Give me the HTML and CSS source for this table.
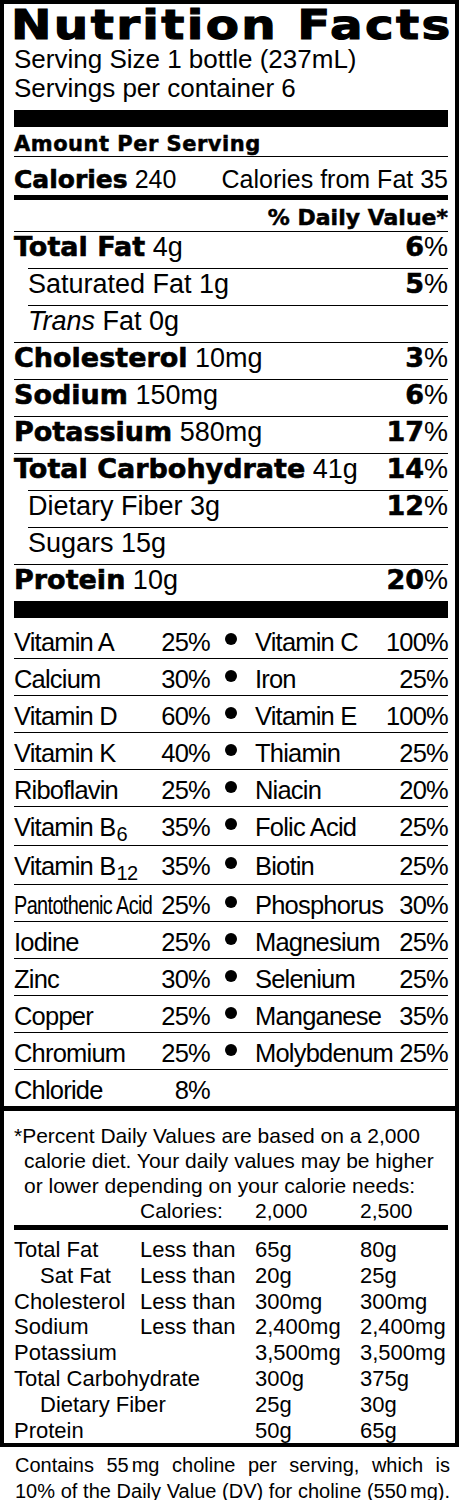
FILE: index.html
```html
<!DOCTYPE html>
<html lang="en">
<head>
<meta charset="utf-8">
<title>Nutrition Facts</title>
<link rel="stylesheet" href="styles.css">
</head>
<body>
<div class="label">
  <div class="main">
    <h1 class="title"><span class="title-text">Nutrition Facts</span></h1>
    <div class="serving">Serving Size 1 bottle (237mL)</div>
    <div class="serving">Servings per container 6</div>
    <div class="bar bar-top"></div>
    <div class="amount">Amount Per Serving</div>
    <div class="cal-row"><span><span class="b">Calories</span> 240</span><span>Calories from Fat 35</span></div>
    <div class="dv-head">% Daily Value*</div>

    <div class="n-row"><span><span class="b">Total Fat</span> 4g</span><span><span class="b">6</span>%</span></div>
    <div class="n-row sub"><span>Saturated Fat 1g</span><span><span class="b">5</span>%</span></div>
    <div class="n-row sub"><span><i>Trans</i> Fat 0g</span></div>
    <div class="n-row"><span><span class="b">Cholesterol</span> 10mg</span><span><span class="b">3</span>%</span></div>
    <div class="n-row"><span><span class="b">Sodium</span> 150mg</span><span><span class="b">6</span>%</span></div>
    <div class="n-row"><span><span class="b">Potassium</span> 580mg</span><span><span class="b">17</span>%</span></div>
    <div class="n-row"><span><span class="b">Total Carbohydrate</span> 41g</span><span><span class="b">14</span>%</span></div>
    <div class="n-row sub"><span>Dietary Fiber 3g</span><span><span class="b">12</span>%</span></div>
    <div class="n-row sub"><span>Sugars 15g</span></div>
    <div class="n-row"><span><span class="b">Protein</span> 10g</span><span><span class="b">20</span>%</span></div>
    <div class="bar"></div>

    <div class="vit-list">
      <div class="v-row"><span>Vitamin A</span><span class="v-pct">25%</span><span class="v-mid"><i class="dot"></i></span><span class="v-name2">Vitamin C</span><span class="v-pct">100%</span></div>
      <div class="v-row"><span>Calcium</span><span class="v-pct">30%</span><span class="v-mid"><i class="dot"></i></span><span class="v-name2">Iron</span><span class="v-pct">25%</span></div>
      <div class="v-row"><span>Vitamin D</span><span class="v-pct">60%</span><span class="v-mid"><i class="dot"></i></span><span class="v-name2">Vitamin E</span><span class="v-pct">100%</span></div>
      <div class="v-row"><span>Vitamin K</span><span class="v-pct">40%</span><span class="v-mid"><i class="dot"></i></span><span class="v-name2">Thiamin</span><span class="v-pct">25%</span></div>
      <div class="v-row"><span>Riboflavin</span><span class="v-pct">25%</span><span class="v-mid"><i class="dot"></i></span><span class="v-name2">Niacin</span><span class="v-pct">20%</span></div>
      <div class="v-row"><span>Vitamin B<span class="vsub">6</span></span><span class="v-pct">35%</span><span class="v-mid"><i class="dot"></i></span><span class="v-name2">Folic Acid</span><span class="v-pct">25%</span></div>
      <div class="v-row"><span>Vitamin B<span class="vsub">12</span></span><span class="v-pct">35%</span><span class="v-mid"><i class="dot"></i></span><span class="v-name2">Biotin</span><span class="v-pct">25%</span></div>
      <div class="v-row"><span><span class="squeeze">Pantothenic Acid</span></span><span class="v-pct">25%</span><span class="v-mid"><i class="dot"></i></span><span class="v-name2">Phosphorus</span><span class="v-pct">30%</span></div>
      <div class="v-row"><span>Iodine</span><span class="v-pct">25%</span><span class="v-mid"><i class="dot"></i></span><span class="v-name2">Magnesium</span><span class="v-pct">25%</span></div>
      <div class="v-row"><span>Zinc</span><span class="v-pct">30%</span><span class="v-mid"><i class="dot"></i></span><span class="v-name2">Selenium</span><span class="v-pct">25%</span></div>
      <div class="v-row"><span>Copper</span><span class="v-pct">25%</span><span class="v-mid"><i class="dot"></i></span><span class="v-name2">Manganese</span><span class="v-pct">35%</span></div>
      <div class="v-row"><span>Chromium</span><span class="v-pct">25%</span><span class="v-mid"><i class="dot"></i></span><span class="v-name2">Molybdenum</span><span class="v-pct">25%</span></div>
      <div class="v-row"><span>Chloride</span><span class="v-pct">8%</span></div>
    </div>
  </div>

  <div class="foot">
    <div class="fn-line">*Percent Daily Values are based on a 2,000</div>
    <div class="fn-line hang">calorie diet. Your daily values may be higher</div>
    <div class="fn-line hang">or lower depending on your calorie needs:</div>
    <div class="fn-cal"><span></span><span>Calories:</span><span>2,000</span><span>2,500</span></div>
    <div class="rule"></div>
    <div class="dv-table">
      <span>Total Fat</span><span>Less than</span><span>65g</span><span>80g</span>
      <span class="ind">Sat Fat</span><span>Less than</span><span>20g</span><span>25g</span>
      <span>Cholesterol</span><span>Less than</span><span>300mg</span><span>300mg</span>
      <span>Sodium</span><span>Less than</span><span>2,400mg</span><span>2,400mg</span>
      <span class="span2">Potassium</span><span>3,500mg</span><span>3,500mg</span>
      <span class="span2">Total Carbohydrate</span><span>300g</span><span>375g</span>
      <span class="span2 ind">Dietary Fiber</span><span>25g</span><span>30g</span>
      <span class="span2">Protein</span><span>50g</span><span>65g</span>
    </div>
  </div>
</div>
<div class="choline">
  <div class="choline-line">Contains 55<span class="unit">mg</span> choline per serving, which is</div>
  <div class="choline-line">10% of the Daily Value (DV) for choline (550<span class="unit">mg</span>).</div>
</div>
</body>
</html>
```

FILE: styles.css
```css
html, body {
  margin: 0;
  padding: 0;
  background: #fff;
}

body {
  color: #000;
  font-family: "Liberation Sans", Arial, sans-serif;
}

.label {
  width: 459px;
  box-sizing: border-box;
  border: 4px solid #000;
}

.main {
  padding: 0 7px 0 10px;
}

.title {
  margin: 1px 0 0;
  font-family: "DejaVu Sans", sans-serif;
  font-weight: 700;
  font-size: 41px;
  line-height: 40px;
  letter-spacing: 2px;
  white-space: nowrap;
}

.title-text {
  display: inline-block;
  margin-left: -3px;
  transform: scaleX(1.18);
  transform-origin: 0 50%;
  -webkit-text-stroke: 1.1px #000;
}

.serving {
  font-size: 26px;
  line-height: 29px;
}

.bar {
  height: 17px;
  background: #000;
}

.bar-top {
  margin-top: 7px;
}

.b {
  font-family: "DejaVu Sans", sans-serif;
  font-weight: 700;
  -webkit-text-stroke: 0.6px #000;
}

.amount {
  font-family: "DejaVu Sans", sans-serif;
  font-weight: 700;
  font-size: 21px;
  line-height: 23px;
  letter-spacing: 0.5px;
  padding-top: 6px;
  border-bottom: 1px solid #000;
  -webkit-text-stroke: 0.5px #000;
}

.cal-row {
  display: flex;
  justify-content: space-between;
  font-size: 25px;
  line-height: 30px;
  padding-top: 7px;
  border-bottom: 5px solid #000;
}

.dv-head {
  text-align: right;
  font-family: "DejaVu Sans", sans-serif;
  font-weight: 700;
  font-size: 22px;
  line-height: 27px;
  padding-top: 4px;
  -webkit-text-stroke: 0.5px #000;
}

.n-row {
  display: flex;
  justify-content: space-between;
  font-size: 27px;
  line-height: 30px;
  padding-bottom: 6px;
  border-top: 1px solid #000;
  white-space: nowrap;
}

.n-row.sub {
  margin-left: 14px;
}

.v-row {
  display: grid;
  grid-template-columns: 140px 56px 42px 1fr auto;
  font-size: 25.5px;
  line-height: 30px;
  letter-spacing: -0.8px;
  padding: 5px 0 1px;
  border-top: 1px solid #000;
  white-space: nowrap;
}

.v-row:first-child {
  border-top: 0;
  padding-top: 9px;
}

.v-pct {
  text-align: right;
}

.v-mid {
  text-align: center;
}

.v-name2 {
  padding-left: 3px;
}

.dot {
  display: inline-block;
  width: 12px;
  height: 12px;
  border-radius: 50%;
  background: #000;
  vertical-align: baseline;
  margin-bottom: 6.5px;
}

.vsub {
  font-size: 20px;
  line-height: 1;
  letter-spacing: -0.5px;
  vertical-align: -5px;
  margin-left: 1px;
}

.squeeze {
  display: inline-block;
  transform: scaleX(0.78);
  transform-origin: 0 50%;
}

.foot {
  border-top: 5px solid #000;
  padding: 12px 7px 0 10px;
  font-size: 21px;
  line-height: 25px;
}

.fn-line {
  white-space: nowrap;
}

.fn-line.hang {
  padding-left: 10px;
}

.fn-cal {
  display: grid;
  grid-template-columns: 126px 115px 105px 1fr;
}

.rule {
  height: 5px;
  margin-top: 2px;
  background: #000;
}

.dv-table {
  display: grid;
  grid-template-columns: 126px 115px 105px 1fr;
  font-size: 22px;
  line-height: 25.8px;
  padding-top: 7px;
  white-space: nowrap;
}

.span2 {
  grid-column: span 2;
}

.ind {
  padding-left: 26px;
}

.choline {
  display: flex;
  flex-direction: column;
  gap: 4px;
  margin-top: 7px;
  padding: 0 12px 0 15px;
  font-size: 20px;
  line-height: 22px;
}

.choline-line {
  text-align: justify;
  text-align-last: justify;
}

.unit {
  margin-left: 3px;
}
```
